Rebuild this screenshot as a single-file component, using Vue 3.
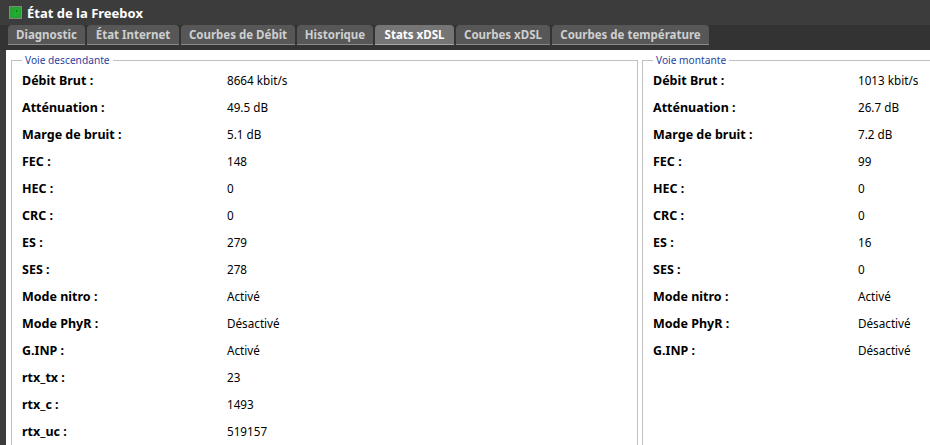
<script setup>
const tabs = [
  { name: 'Diagnostic', w: 77 }, { name: 'État Internet', w: 92 }, { name: 'Courbes de Débit', w: 114 },
  { name: 'Historique', w: 76 }, { name: 'Stats xDSL', w: 79 }, { name: 'Courbes xDSL', w: 94 },
  { name: 'Courbes de température', w: 157 }
]
const down = [
  ['Débit Brut :', '8664 kbit/s'], ['Atténuation :', '49.5 dB'], ['Marge de bruit :', '5.1 dB'],
  ['FEC :', '148'], ['HEC :', '0'], ['CRC :', '0'], ['ES :', '279'], ['SES :', '278'],
  ['Mode nitro :', 'Activé'], ['Mode PhyR :', 'Désactivé'], ['G.INP :', 'Activé'],
  ['rtx_tx :', '23'], ['rtx_c :', '1493'], ['rtx_uc :', '519157']
]
const up = [
  ['Débit Brut :', '1013 kbit/s'], ['Atténuation :', '26.7 dB'], ['Marge de bruit :', '7.2 dB'],
  ['FEC :', '99'], ['HEC :', '0'], ['CRC :', '0'], ['ES :', '16'], ['SES :', '0'],
  ['Mode nitro :', 'Activé'], ['Mode PhyR :', 'Désactivé'], ['G.INP :', 'Désactivé']
]
const groups = [
  { title: 'Voie descendante', rows: down, cls: 'left' },
  { title: 'Voie montante', rows: up, cls: 'right' }
]
</script>

<template>
  <div class="win">
    <div class="title">
      <svg class="icon" width="13" height="13" viewBox="0 0 13 13">
        <rect x="0.5" y="0.5" width="12" height="12" fill="#2a9f35" stroke="#7f8a7f" />
        <path d="M2.5 10.5 L5.5 7.5 L5.5 3 L10.5 3 L10.5 6 L6.5 10.5 Z" fill="#16b82a" />
        <path d="M7 4 L9 4 L7 7 Z" fill="#0c7a1a" />
      </svg>
      <span>État de la Freebox</span>
    </div>
    <div class="tabs">
      <div v-for="t in tabs" :key="t.name" class="tab" :class="{ active: t.name === 'Stats xDSL' }" :style="{ width: t.w + 'px' }">{{ t.name }}</div>
    </div>
    <div class="body">
      <fieldset v-for="g in groups" :key="g.title" class="group" :class="g.cls">
        <legend>{{ g.title }}</legend>
        <div v-for="r in g.rows" :key="r[0]" class="row">
          <b class="lab">{{ r[0] }}</b>
          <span class="val">{{ r[1] }}</span>
        </div>
      </fieldset>
    </div>
  </div>
</template>

<style scoped>
.win {
  width: 930px;
  height: 445px;
  overflow: hidden;
  background: #3c3c3c;
  display: flex;
  flex-direction: column;
  font-family: "Noto Sans", sans-serif;
}
.title {
  height: 25px;
  display: flex;
  align-items: center;
  gap: 5px;
  padding-left: 9px;
  color: #fff;
  font-weight: bold;
  font-size: 13px;
}
.icon { flex: none; }
.tabs {
  height: 25px;
  display: flex;
  gap: 2px;
  padding-left: 8px;
  align-items: flex-start;
  background: #333;
}
.tab {
  height: 20px;
  line-height: 19px;
  box-sizing: border-box;
  text-align: center;
  background: #575757;
  color: #cfcfcf;
  font-size: 11.5px;
  font-weight: bold;
  white-space: nowrap;
  border-radius: 4px 4px 0 0;
  border-bottom: 1px solid #8a8a8a;
}
.tab.active {
  background: #757575;
  color: #fff;
  border-bottom-color: #a8a8a8;
}
.body {
  flex: 1;
  background: #fff;
  margin-left: 6px;
  display: flex;
  gap: 4px;
  padding: 3px 0 0 5px;
  overflow: hidden;
  min-height: 0;
}
.group {
  margin: 0;
  border: 1px solid #c0c0c0;
  padding: 0 10px;
  min-width: 0;
  box-sizing: border-box;
  height: 420px;
}
.group.left { width: 627px; flex: none; }
.group.right { flex: 1; margin-right: -40px; }
legend {
  color: #2a3f9f;
  font-size: 10.2px;
  padding: 0 3px;
}
.row {
  height: 27px;
  display: flex;
  align-items: baseline;
  line-height: 27px;
  font-size: 12.5px;
  color: #000;
}
.lab { width: 205px; flex: none; }
.val { font-size: 11.7px; white-space: nowrap; }
</style>
